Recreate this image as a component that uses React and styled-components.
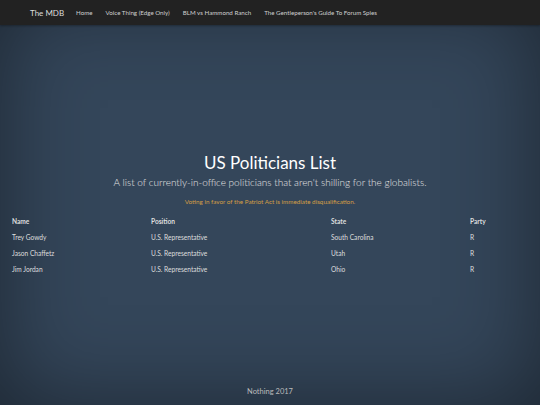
import React from "react";
import styled, { createGlobalStyle } from "styled-components";

const GlobalStyle = createGlobalStyle`
  html, body { margin: 0; padding: 0; height: 100%; }
  body {
    background-color: #34465a;
    box-shadow: inset 0 0 90px rgba(0, 0, 0, 0.45);
    font-family: Lato, "Open Sans", sans-serif;
    color: #fff;
  }
  #root { height: 100%; }
`;

const Page = styled.div`
  height: 100vh;
  display: flex;
  flex-direction: column;
`;

const NavBar = styled.nav`
  height: 25px;
  background: #222;
  display: flex;
  align-items: center;
  padding-left: 30px;
  box-shadow: 0 1px 2px rgba(0, 0, 0, 0.3);
  flex-shrink: 0;
`;

const Brand = styled.a`
  color: #ddd;
  font-size: 8px;
  margin-right: 12px;
`;

const NavLink = styled.a`
  color: #d0d0d0;
  font-size: 6.2px;
  margin-right: 13px;
`;

const Main = styled.main`
  flex: 1;
  padding-top: 128px;
  display: flex;
  flex-direction: column;
  align-items: center;
`;

const Title = styled.h1`
  margin: 0;
  font-size: 17px;
  font-weight: 400;
  color: #fff;
  line-height: 20px;
`;

const Lead = styled.p`
  margin: 2px 0 0;
  font-size: 10px;
  font-weight: 300;
  color: #e4e4e4;
  line-height: 14px;
`;

const Warning = styled.p`
  margin: 8px 0 0;
  font-size: 6.3px;
  color: #d59f45;
  line-height: 10px;
`;

const Table = styled.table`
  margin-top: 9.6px;
  width: calc(100% - 24px);
  border-collapse: collapse;
  font-size: 6.6px;
  color: #dedede;
`;

const Th = styled.th`
  text-align: left;
  font-weight: 700;
  padding: 0 0 8px;
  width: ${(p) => p.$w || "auto"};
`;

const Td = styled.td`
  padding: 0 0 8px;
  height: 8px;
  font-weight: 400;
`;

const Footer = styled.footer`
  text-align: center;
  font-size: 7.5px;
  color: #bbb;
  padding-bottom: 9px;
`;

const rows = [
  ["Trey Gowdy", "U.S. Representative", "South Carolina", "R"],
  ["Jason Chaffetz", "U.S. Representative", "Utah", "R"],
  ["Jim Jordan", "U.S. Representative", "Ohio", "R"],
];

export default function App() {
  return (
    <>
      <GlobalStyle />
      <Page>
        <NavBar>
          <Brand>The MDB</Brand>
          <NavLink>Home</NavLink>
          <NavLink>Voice Thing (Edge Only)</NavLink>
          <NavLink>BLM vs Hammond Ranch</NavLink>
          <NavLink>The Gentleperson's Guide To Forum Spies</NavLink>
        </NavBar>
        <Main>
          <Title>US Politicians List</Title>
          <Lead>A list of currently-in-office politicians that aren't shilling for the globalists.</Lead>
          <Warning>Voting in favor of the Patriot Act is immediate disqualification.</Warning>
          <Table>
            <thead>
              <tr>
                <Th $w="139px">Name</Th>
                <Th $w="180px">Position</Th>
                <Th $w="139px">State</Th>
                <Th>Party</Th>
              </tr>
            </thead>
            <tbody>
              {rows.map((r) => (
                <tr key={r[0]}>
                  {r.map((c, i) => (
                    <Td key={i}>{c}</Td>
                  ))}
                </tr>
              ))}
            </tbody>
          </Table>
        </Main>
        <Footer>Nothing 2017</Footer>
      </Page>
    </>
  );
}
